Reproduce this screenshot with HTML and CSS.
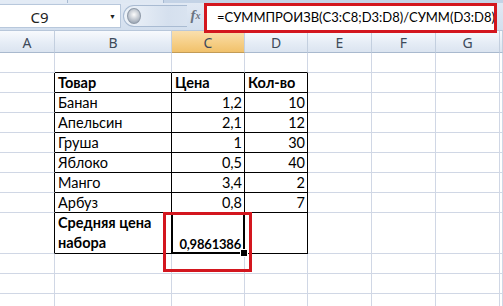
FILE: index.html
```html
<!DOCTYPE html>
<html lang="ru">
<head>
    <meta charset="UTF-8">
    <title>Средняя цена набора</title>
    <link rel="stylesheet" href="styles.css">
</head>
<body>
    <div class="ribbon-edge"><span class="tab-left"></span><span class="tab-right"></span></div>

    <div class="formula-bar">
        <div class="name-box">
            <span class="cell-name">C9</span>
            <span class="drop">&#9660;</span>
        </div>
        <div class="splitter"><span class="knob"></span></div>
        <div class="fx">f<sub>x</sub></div>
        <div class="formula">=СУММПРОИЗВ(C3:C8;D3:D8)/СУММ(D3:D8)</div>
    </div>

    <table class="sheet">
        <colgroup>
            <col class="w-a"><col class="w-b"><col class="w-c"><col class="w-d">
            <col class="w-e"><col class="w-f"><col class="w-g"><col class="w-h">
        </colgroup>
        <tr class="heads">
            <th>A</th><th>B</th><th class="active">C</th><th>D</th><th>E</th><th>F</th><th>G</th><th></th>
        </tr>
        <tr>
            <td></td><td class="above"></td><td class="above"></td><td class="above"></td><td></td><td></td><td></td><td></td>
        </tr>
        <tr>
            <td class="left"></td><td class="box bold">Товар</td><td class="box bold">Цена</td><td class="box bold">Кол-во</td><td></td><td></td><td></td><td></td>
        </tr>
        <tr>
            <td class="left"></td><td class="box">Банан</td><td class="box num">1,2</td><td class="box num">10</td><td></td><td></td><td></td><td></td>
        </tr>
        <tr>
            <td class="left"></td><td class="box">Апельсин</td><td class="box num">2,1</td><td class="box num">12</td><td></td><td></td><td></td><td></td>
        </tr>
        <tr>
            <td class="left"></td><td class="box">Груша</td><td class="box num">1</td><td class="box num">30</td><td></td><td></td><td></td><td></td>
        </tr>
        <tr>
            <td class="left"></td><td class="box">Яблоко</td><td class="box num">0,5</td><td class="box num">40</td><td></td><td></td><td></td><td></td>
        </tr>
        <tr>
            <td class="left"></td><td class="box">Манго</td><td class="box num">3,4</td><td class="box num">2</td><td></td><td></td><td></td><td></td>
        </tr>
        <tr>
            <td class="left"></td><td class="box">Арбуз</td><td class="box num">0,8</td><td class="box num">7</td><td></td><td></td><td></td><td></td>
        </tr>
        <tr class="tall">
            <td class="left"></td><td class="box bold wrap">Средняя цена набора</td><td class="box num bold selected">0,9861386</td><td class="box"></td><td></td><td></td><td></td><td></td>
        </tr>
        <tr>
            <td></td><td></td><td></td><td></td><td></td><td></td><td></td><td></td>
        </tr>
        <tr>
            <td></td><td></td><td></td><td></td><td></td><td></td><td></td><td></td>
        </tr>
        <tr>
            <td></td><td></td><td></td><td></td><td></td><td></td><td></td><td></td>
        </tr>
    </table>

    <div class="mark"></div>
</body>
</html>
```

FILE: styles.css
```css
* {
    box-sizing: border-box;
    margin: 0;
    padding: 0;
}

body {
    width: 503px;
    height: 306px;
    overflow: hidden;
    position: relative;
    background: #fff;
    font-family: 'Lato', 'Liberation Sans', sans-serif;
    color: #000;
}

/* bottom edge of the ribbon */
.ribbon-edge {
    height: 3px;
    display: flex;
    background: #c4d3e6;
}

.tab-left {
    width: 68px;
    background: #e3ebf5;
    border-right: 1px solid #a7bad2;
}

.tab-right {
    width: 96px;
    background: #dfe8f3;
    border-right: 1px solid #a7bad2;
}

/* formula bar */
.formula-bar {
    height: 27px;
    display: flex;
    align-items: stretch;
    background: linear-gradient(#e1e9f4, #d3dfee);
}

.name-box {
    width: 121px;
    margin: 1px 0 2px 0;
    background: #fff;
    border: 1px solid #b8c8dc;
    border-left: none;
    display: flex;
    align-items: center;
}

.cell-name {
    flex: 1;
    text-align: center;
    font-family: 'Noto Sans', sans-serif;
    font-size: 15px;
    color: #222;
    padding-right: 30px;
    padding-top: 1px;
}

.drop {
    font-size: 7px;
    color: #222;
    margin-right: 4px;
}

.splitter {
    width: 64px;
    margin: 2px 0 3px 2px;
    border: 1px solid #a9bbd2;
    border-right: none;
    border-radius: 12px 0 0 12px;
    background: linear-gradient(90deg, #eef3f9, #d5e0ee 70%, #d9e3f0);
    display: flex;
    align-items: center;
    padding-left: 3px;
}

.knob {
    width: 14px;
    height: 16px;
    border-radius: 50%;
    background: radial-gradient(circle at 50% 40%, #fdfdfd, #aab3bf 70%, #8f99a6);
    border: 1px solid #8f9aa8;
}

.fx {
    width: 17px;
    font-family: 'Liberation Serif', serif;
    font-style: italic;
    font-weight: bold;
    font-size: 15px;
    color: #6b7380;
    display: flex;
    align-items: center;
    justify-content: center;
    padding-bottom: 2px;
}

.fx sub {
    font-size: 10px;
    vertical-align: -2px;
}

.formula {
    width: 293px;
    height: 30px;
    border: 3px solid #d3161e;
    background: #fff;
    font-family: 'Lato', 'Liberation Sans', sans-serif;
    font-size: 13px;
    line-height: 23px;
    padding-left: 10px;
    white-space: nowrap;
    overflow: hidden;
    position: relative;
    z-index: 2;
}

/* sheet grid */
.sheet {
    border-collapse: separate;
    border-spacing: 0;
    table-layout: fixed;
    width: 503px;
    font-size: 14.5px;
}

.w-a { width: 55px; }
.w-b { width: 117px; }
.w-c { width: 73px; }
.w-d { width: 63px; }
.w-e { width: 64px; }
.w-f { width: 64px; }
.w-g { width: 64px; }
.w-h { width: 3px; }

.heads th {
    height: 23px;
    font-weight: normal;
    font-family: 'Noto Sans', sans-serif;
    font-size: 14px;
    color: #3d4a5a;
    background: linear-gradient(#f8fafd, #e6edf6 55%, #dbe4f0);
    border-right: 1px solid #c3cfdf;
    border-bottom: 1px solid #a9b9ce;
    border-top: 1px solid #b8c7da;
    padding-top: 1px;
}

.heads th.active {
    background: linear-gradient(#f9dfae, #f6cf87 55%, #f1c16b);
    border-bottom-color: #c29b57;
}

td {
    height: 20px;
    border-right: 1px solid #d0d7e5;
    border-bottom: 1px solid #d0d7e5;
    padding: 0 2px 0 3px;
    vertical-align: bottom;
    line-height: 18px;
    white-space: nowrap;
    overflow: hidden;
}

.tall td {
    height: 40px;
}

td.left {
    border-right-color: #000;
}

td.above {
    border-bottom-color: #000;
}

td.box {
    border-right-color: #000;
    border-bottom-color: #000;
}

.bold {
    font-weight: bold;
}

.num {
    text-align: right;
}

td.wrap {
    white-space: normal;
    line-height: 20px;
}

/* active cell */
td.selected {
    position: relative;
    overflow: visible;
    font-size: 13px;
    letter-spacing: -0.2px;
    padding-right: 3px;
}

td.selected::after {
    content: "";
    position: absolute;
    left: -1px;
    top: -1px;
    right: -1px;
    bottom: -1px;
    border: 2px solid #000;
    box-shadow: inset 0 0 0 1px #fff;
}

td.selected::before {
    content: "";
    position: absolute;
    right: -4px;
    bottom: -4px;
    width: 6px;
    height: 6px;
    background: #000;
    border: 1px solid #fff;
    z-index: 1;
}

/* red highlight around the result */
.mark {
    position: absolute;
    left: 163px;
    top: 212px;
    width: 89px;
    height: 60px;
    border: 3px solid #d3161e;
}
```
